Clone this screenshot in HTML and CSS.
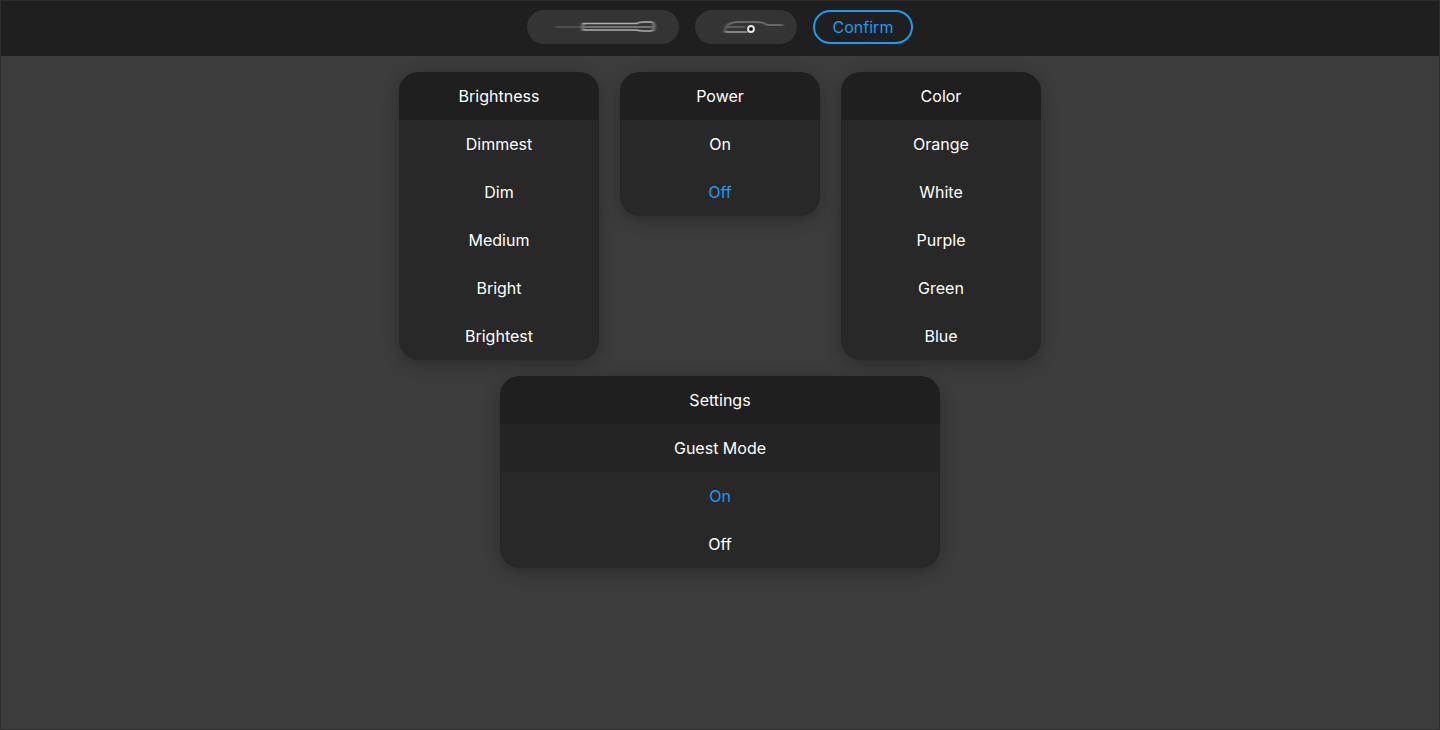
FILE: index.html
```html
<!DOCTYPE html>
<html>
<head>
<meta charset="utf-8">
<link rel="stylesheet" href="styles.css">
</head>
<body>
<div class="page">
  <header class="topbar">
    <div class="pill pill-wide">
      <svg class="blurry" width="152" height="34" viewBox="0 0 152 34">
        <defs><filter id="mb" x="-20%" y="-50%" width="140%" height="200%"><feGaussianBlur stdDeviation="1.6 0.6"/></filter></defs>
        <g filter="url(#mb)" fill="none" stroke-width="1.6">
          <path d="M28 17 H54" stroke="#555"/>
          <path d="M56 13.5 H110 Q112 12 116 12 H124 Q127 12 127 16.5 Q127 21 124 21 H116 Q112 21 110 20 H56 Z" stroke="#b0b0b0"/>
          <path d="M58 17 H125" stroke="#8a8a8a"/>
        </g>
      </svg>
    </div>
    <div class="pill pill-mid">
      <svg class="blurry" width="102" height="34" viewBox="0 0 102 34">
        <defs><filter id="mb2" x="-20%" y="-50%" width="140%" height="200%"><feGaussianBlur stdDeviation="1.8 0.6"/></filter></defs>
        <g filter="url(#mb2)" fill="none" stroke-width="1.6">
          <path d="M30 22 Q30 13 41 12 H62 Q68 12 72 15 H88" stroke="#777"/>
          <path d="M30 22 H53" stroke="#999"/>
          <path d="M32 17 H50" stroke="#666"/>
        </g>
        <circle cx="56" cy="19" r="3" fill="none" stroke="#e6e6e6" stroke-width="1.8"/>
        <circle cx="56" cy="19" r="1.2" fill="#111"/>
      </svg>
    </div>
    <button class="confirm">Confirm</button>
  </header>

  <main class="grid">
    <section class="card">
      <div class="card-title">Brightness</div>
      <div class="row">Dimmest</div>
      <div class="row">Dim</div>
      <div class="row">Medium</div>
      <div class="row">Bright</div>
      <div class="row">Brightest</div>
    </section>
    <section class="card">
      <div class="card-title">Power</div>
      <div class="row">On</div>
      <div class="row active">Off</div>
    </section>
    <section class="card">
      <div class="card-title">Color</div>
      <div class="row">Orange</div>
      <div class="row">White</div>
      <div class="row">Purple</div>
      <div class="row">Green</div>
      <div class="row">Blue</div>
    </section>
    <section class="card card-wide">
      <div class="card-title">Settings</div>
      <div class="row subtitle">Guest Mode</div>
      <div class="row active">On</div>
      <div class="row">Off</div>
    </section>
  </main>
</div>
</body>
</html>
```

FILE: styles.css
```css
* { box-sizing: border-box; }

html, body {
  margin: 0;
  padding: 0;
  height: 100%;
}

body {
  background: #3c3c3c;
  font-family: Inter, "Noto Sans", "Liberation Sans", sans-serif;
  color: #ffffff;
}

.page {
  min-height: 100%;
  border: 1px solid #2e2e2e;
  border-top-color: #2a2a2a;
}

.topbar {
  height: 55px;
  background: #1f1f1f;
  display: flex;
  justify-content: center;
  align-items: flex-start;
  gap: 16px;
  padding-top: 9px;
}

.pill {
  height: 34px;
  border-radius: 17px;
  background: #343434;
  display: flex;
  align-items: center;
  justify-content: center;
  overflow: hidden;
}

.pill-wide { width: 152px; }
.pill-mid { width: 102px; }

.blurry { display: block; }

.confirm {
  width: 100px;
  height: 34px;
  border-radius: 17px;
  border: 2px solid #1a9cf2;
  background: transparent;
  color: #1a9cf2;
  font-family: inherit;
  font-size: 16px;
  padding: 0;
}

.grid {
  display: flex;
  flex-wrap: wrap;
  justify-content: center;
  align-items: flex-start;
  gap: 16px 21px;
  width: 642px;
  margin: 16px auto 0;
}

.card {
  width: 200px;
  border-radius: 20px;
  overflow: hidden;
  background: #282828;
  box-shadow: 0 4px 16px rgba(0, 0, 0, 0.26);
}

.card-wide {
  width: 440px;
}

.card-title,
.row {
  height: 48px;
  display: flex;
  align-items: center;
  justify-content: center;
  font-size: 16px;
  line-height: 1;
}

.card-title {
  background: #1f1f1f;
}

.row.subtitle {
  background: #242424;
}

.row.active {
  color: #1a9cf2;
}
```
